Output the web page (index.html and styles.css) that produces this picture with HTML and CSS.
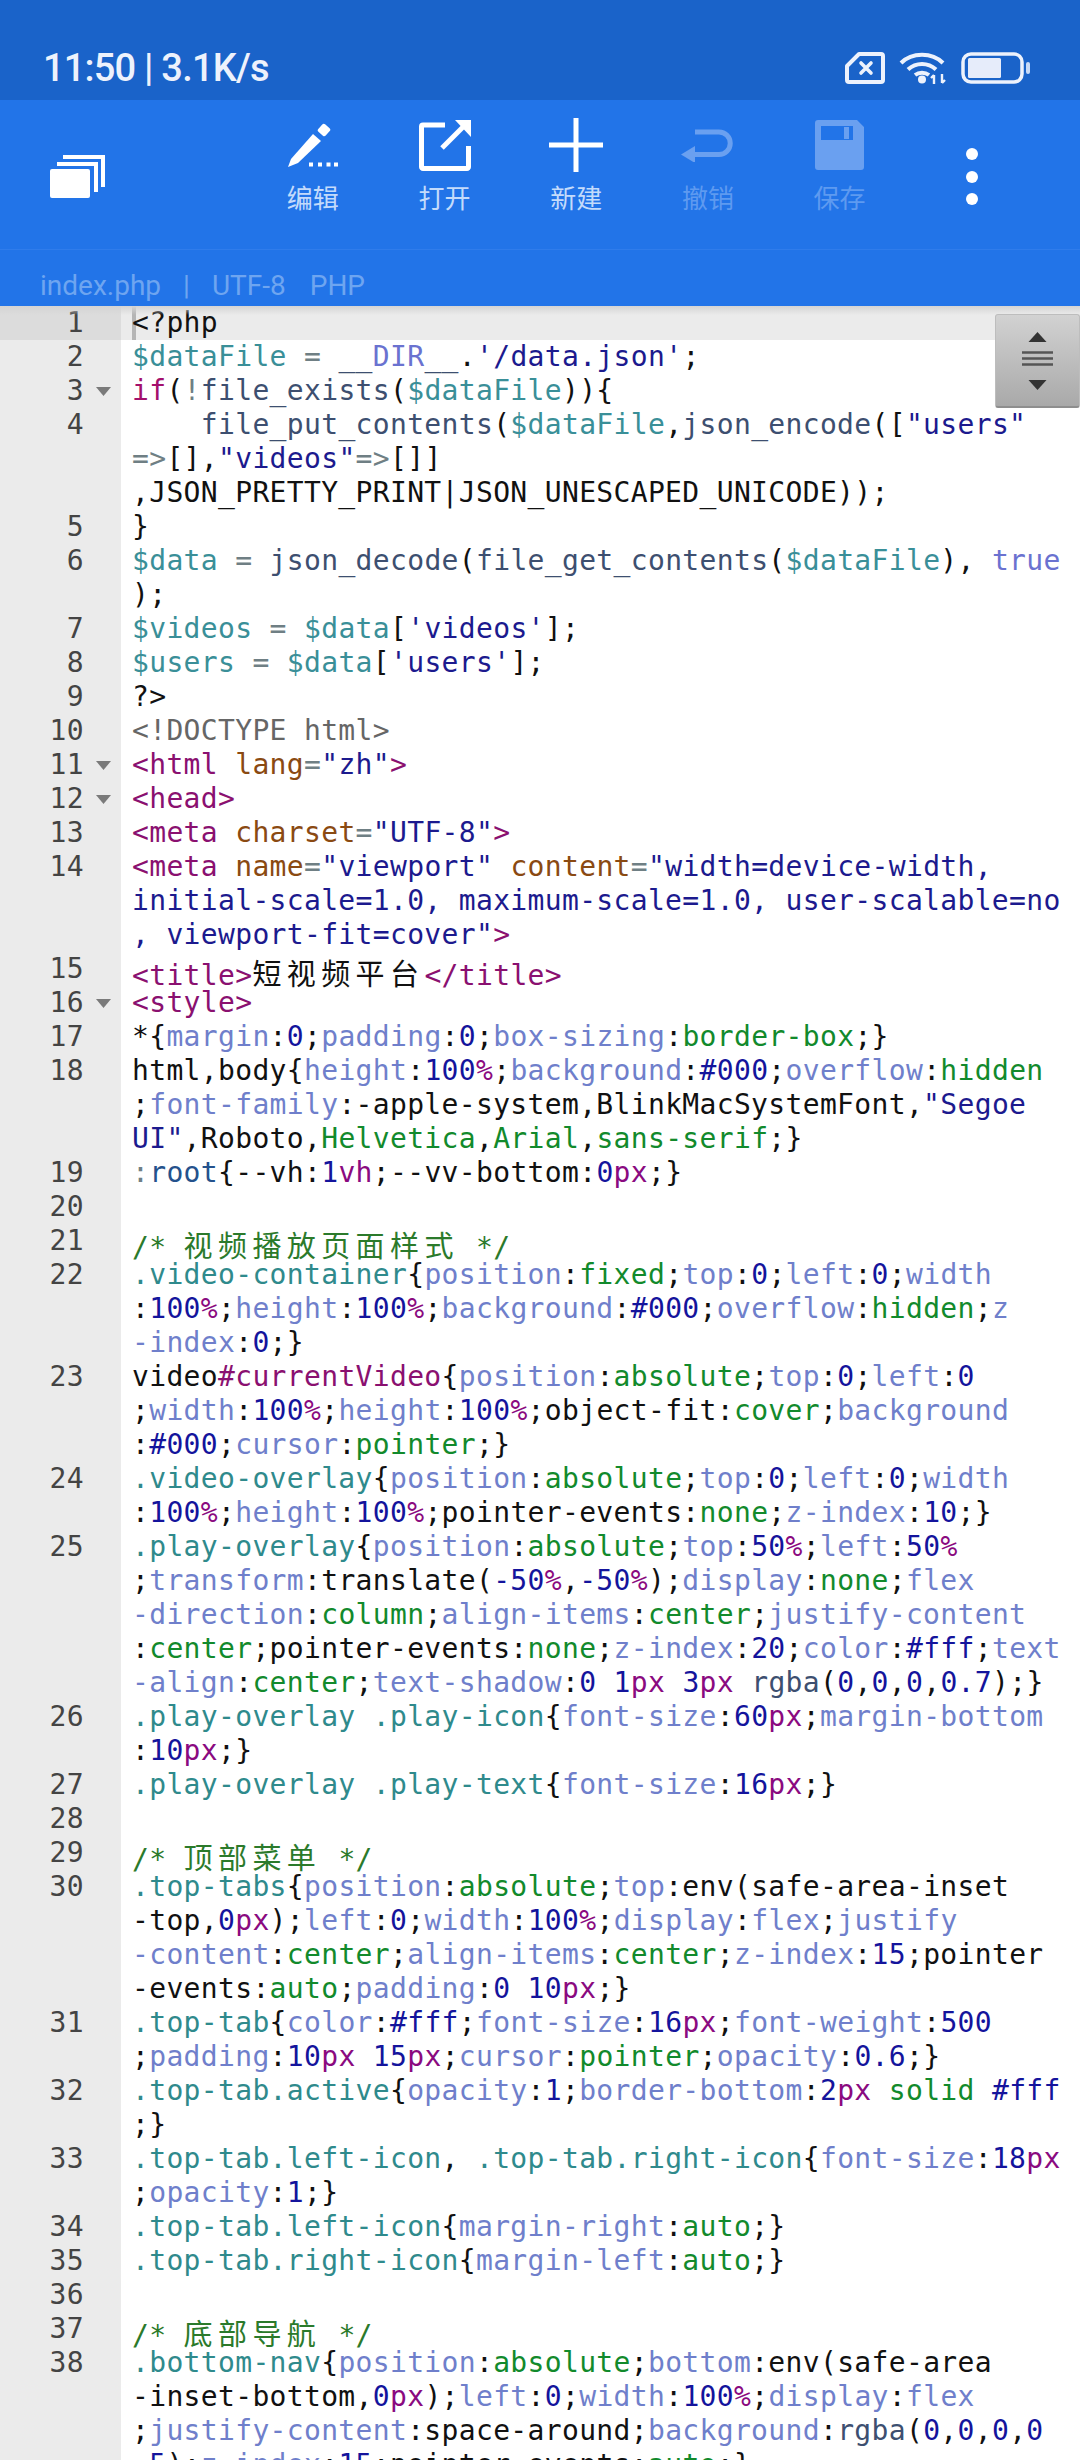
FILE: index.html
```html
<!DOCTYPE html>
<html lang="zh-CN">
<head>
<meta charset="utf-8">
<title>index.php</title>
<link rel="stylesheet" href="styles.css">
</head>
<body>
<div class="app">
<header class="statusbar">
  <div class="clock">11:50 | 3.1K/s</div>
  <div class="status-icons">
    <svg class="i-sim" width="40" height="32" viewBox="0 0 40 32"><path d="M14 2H36a2 2 0 0 1 2 2V28a2 2 0 0 1-2 2H4a2 2 0 0 1-2-2V14Z" fill="none" stroke="#edf2fc" stroke-width="4" stroke-linejoin="round"/><path d="M16 11l10 10M26 11L16 21" stroke="#edf2fc" stroke-width="3.6" stroke-linecap="round"/></svg>
    <svg class="i-wifi" width="48" height="34" viewBox="0 0 48 34"><g fill="none" stroke="#edf2fc" stroke-width="4"><path d="M2 12C13 1 33 1 44 12"/><path d="M9 18.500C17 11 29 11 37 18.500"/><path d="M16 24C20 21 26 21 30 24"/></g><circle cx="23" cy="28.500" r="4" fill="#edf2fc"/><path d="M35 33V24M32 27l3-3M43 23V32M46 29l-3 3" stroke="#edf2fc" stroke-width="2.400" fill="none"/></svg>
    <svg class="i-batt" width="69" height="32" viewBox="0 0 69 32"><rect x="2" y="2" width="59" height="28" rx="8" fill="none" stroke="#edf2fc" stroke-width="3.500"/><rect x="7" y="6" width="33" height="20" rx="1.500" fill="#e6ecfa"/><rect x="65" y="10" width="4" height="12" rx="2" fill="#c8daf6"/></svg>
  </div>
</header>
<section class="toolbar">
  <div class="tools">
    <div class="tabs-btn">
      <svg width="55" height="43" viewBox="0 0 55 43"><rect y="14" width="40" height="29" rx="2" fill="#fff"/><path d="M7 9H46V37" fill="none" stroke="#fff" stroke-width="4"/><path d="M13 2H53V32" fill="none" stroke="#fff" stroke-width="4"/></svg>
    </div>
    <div class="tool">
      <div class="tool-icon"><svg class="i-edit" width="50" height="44" viewBox="0 0 50 44"><path d="M0 44L3 36 25 11 33 18 10 40Z" fill="#fff"/><rect x="31" y="2" width="10" height="10" rx="2" transform="rotate(42 36 7)" fill="#fff"/><path d="M21 41.500h4M30 41.500h4M38.500 41.500h4M46 41.500h4" stroke="#fff" stroke-width="4"/></svg></div>
      <span class="tool-label">编辑</span>
    </div>
    <div class="tool">
      <div class="tool-icon"><svg width="52" height="51" viewBox="0 0 52 51"><path d="M26 5H4a1.500 1.500 0 0 0-1.500 1.500V47a1.500 1.500 0 0 0 1.500 1.500H48a1.500 1.500 0 0 0 1.500-1.500V26" fill="none" stroke="#fff" stroke-width="5"/><path d="M23 28L44 7" stroke="#fff" stroke-width="5"/><path d="M36 0H52V17Z" fill="#fff"/></svg></div>
      <span class="tool-label">打开</span>
    </div>
    <div class="tool">
      <div class="tool-icon"><svg width="54" height="54" viewBox="0 0 54 54"><path d="M27 0V54M0 27H54" stroke="#fff" stroke-width="5"/></svg></div>
      <span class="tool-label">新建</span>
    </div>
    <div class="tool off">
      <div class="tool-icon"><svg width="54" height="33" viewBox="0 0 54 33"><path d="M10 25.500H38A11.200 11.200 0 0 0 38 3H14" fill="none" stroke="#6aa0f0" stroke-width="5"/><path d="M0 25.500L14 17V34Z" fill="#6aa0f0"/></svg></div>
      <span class="tool-label">撤销</span>
    </div>
    <div class="tool off">
      <div class="tool-icon"><svg width="49" height="50" viewBox="0 0 49 50"><path d="M3 0H42L49 7V47a3 3 0 0 1-3 3H3a3 3 0 0 1-3-3V3a3 3 0 0 1 3-3ZM6 6V20H38V6Z" fill="#6aa0f0" fill-rule="evenodd"/><rect x="29" y="7" width="5" height="12" fill="#6aa0f0"/></svg></div>
      <span class="tool-label">保存</span>
    </div>
    <div class="tool more"><span class="dot"></span><span class="dot"></span><span class="dot"></span></div>
  </div>
  <div class="fileinfo"><span>index.php</span><span class="bar">|</span><span>UTF-8</span><span class="lang">PHP</span></div>
</section>
<main class="editor">
  <div class="shade"></div>
  <div class="scroll-thumb">
    <svg width="31" height="58" viewBox="0 0 31 58"><path d="M15.500 0L24.500 10H6.500Z" fill="#333"/><path d="M0 20.500H31M0 26.500H31M0 32.500H31" stroke="#555" stroke-width="2.500"/><path d="M15.500 58L24.500 48H6.500Z" fill="#333"/></svg>
  </div>
  <div class="row active"><div class="gut"><span class="num">1</span></div><div class="code"><div class="ln">&lt;?php</div></div></div>
  <div class="row"><div class="gut"><span class="num">2</span></div><div class="code"><div class="ln"><span class="v">$dataFile</span> <span class="o">=</span> <span class="f">__</span><span class="c">DIR</span><span class="f">__</span>.<span class="s">'/data.json'</span>;</div></div></div>
  <div class="row"><div class="gut"><span class="num">3</span><span class="fold"></span></div><div class="code"><div class="ln"><span class="k">if</span>(<span class="o">!</span><span class="f">file_exists</span>(<span class="v">$dataFile</span>)){</div></div></div>
  <div class="row"><div class="gut"><span class="num">4</span></div><div class="code"><div class="ln">    <span class="f">file_put_contents</span>(<span class="v">$dataFile</span>,<span class="f">json_encode</span>([<span class="s">"users"</span></div><div class="ln"><span class="o">=&gt;</span>[],<span class="s">"videos"</span><span class="o">=&gt;</span>[]]</div><div class="ln">,JSON_PRETTY_PRINT|JSON_UNESCAPED_UNICODE));</div></div></div>
  <div class="row"><div class="gut"><span class="num">5</span></div><div class="code"><div class="ln">}</div></div></div>
  <div class="row"><div class="gut"><span class="num">6</span></div><div class="code"><div class="ln"><span class="v">$data</span> <span class="o">=</span> <span class="f">json_decode</span>(<span class="f">file_get_contents</span>(<span class="v">$dataFile</span>), <span class="c">true</span></div><div class="ln">);</div></div></div>
  <div class="row"><div class="gut"><span class="num">7</span></div><div class="code"><div class="ln"><span class="v">$videos</span> <span class="o">=</span> <span class="v">$data</span>[<span class="s">'videos'</span>];</div></div></div>
  <div class="row"><div class="gut"><span class="num">8</span></div><div class="code"><div class="ln"><span class="v">$users</span> <span class="o">=</span> <span class="v">$data</span>[<span class="s">'users'</span>];</div></div></div>
  <div class="row"><div class="gut"><span class="num">9</span></div><div class="code"><div class="ln">?&gt;</div></div></div>
  <div class="row"><div class="gut"><span class="num">10</span></div><div class="code"><div class="ln"><span class="d">&lt;!DOCTYPE html&gt;</span></div></div></div>
  <div class="row"><div class="gut"><span class="num">11</span><span class="fold"></span></div><div class="code"><div class="ln"><span class="t">&lt;html</span> <span class="a">lang</span><span class="o">=</span><span class="s">"zh"</span><span class="t">&gt;</span></div></div></div>
  <div class="row"><div class="gut"><span class="num">12</span><span class="fold"></span></div><div class="code"><div class="ln"><span class="t">&lt;head&gt;</span></div></div></div>
  <div class="row"><div class="gut"><span class="num">13</span></div><div class="code"><div class="ln"><span class="t">&lt;meta</span> <span class="a">charset</span><span class="o">=</span><span class="s">"UTF-8"</span><span class="t">&gt;</span></div></div></div>
  <div class="row"><div class="gut"><span class="num">14</span></div><div class="code"><div class="ln"><span class="t">&lt;meta</span> <span class="a">name</span><span class="o">=</span><span class="s">"viewport"</span> <span class="a">content</span><span class="o">=</span><span class="s">"width=device-width,</span></div><div class="ln"><span class="s">initial-scale=1.0, maximum-scale=1.0, user-scalable=no</span></div><div class="ln"><span class="s">, viewport-fit=cover"</span><span class="t">&gt;</span></div></div></div>
  <div class="row"><div class="gut"><span class="num">15</span></div><div class="code"><div class="ln wide"><span class="t">&lt;title&gt;</span><span class="cjk">短视频平台</span><span class="t">&lt;/title&gt;</span></div></div></div>
  <div class="row"><div class="gut"><span class="num">16</span><span class="fold"></span></div><div class="code"><div class="ln"><span class="t">&lt;style&gt;</span></div></div></div>
  <div class="row"><div class="gut"><span class="num">17</span></div><div class="code"><div class="ln">*{<span class="p">margin</span>:<span class="n">0</span>;<span class="p">padding</span>:<span class="n">0</span>;<span class="p">box-sizing</span>:<span class="w">border-box</span>;}</div></div></div>
  <div class="row"><div class="gut"><span class="num">18</span></div><div class="code"><div class="ln">html,body{<span class="p">height</span>:<span class="n">100</span><span class="u">%</span>;<span class="p">background</span>:<span class="n">#000</span>;<span class="p">overflow</span>:<span class="w">hidden</span></div><div class="ln">;<span class="p">font-family</span>:-apple-system,BlinkMacSystemFont,<span class="s">"Segoe</span></div><div class="ln"><span class="s">UI"</span>,Roboto,<span class="w">Helvetica</span>,<span class="w">Arial</span>,<span class="w">sans-serif</span>;}</div></div></div>
  <div class="row"><div class="gut"><span class="num">19</span></div><div class="code"><div class="ln"><span class="o">:</span><span class="r">root</span>{--vh:<span class="n">1</span><span class="u">vh</span>;--vv-bottom:<span class="n">0</span><span class="u">px</span>;}</div></div></div>
  <div class="row"><div class="gut"><span class="num">20</span></div><div class="code"><div class="ln"></div></div></div>
  <div class="row"><div class="gut"><span class="num">21</span></div><div class="code"><div class="ln wide"><span class="m">/* <span class="cjk">视频播放页面样式</span> */</span></div></div></div>
  <div class="row"><div class="gut"><span class="num">22</span></div><div class="code"><div class="ln"><span class="h">.video-container</span>{<span class="p">position</span>:<span class="w">fixed</span>;<span class="p">top</span>:<span class="n">0</span>;<span class="p">left</span>:<span class="n">0</span>;<span class="p">width</span></div><div class="ln">:<span class="n">100</span><span class="u">%</span>;<span class="p">height</span>:<span class="n">100</span><span class="u">%</span>;<span class="p">background</span>:<span class="n">#000</span>;<span class="p">overflow</span>:<span class="w">hidden</span>;<span class="p">z</span></div><div class="ln"><span class="p">-index</span>:<span class="n">0</span>;}</div></div></div>
  <div class="row"><div class="gut"><span class="num">23</span></div><div class="code"><div class="ln">video<span class="t">#currentVideo</span>{<span class="p">position</span>:<span class="w">absolute</span>;<span class="p">top</span>:<span class="n">0</span>;<span class="p">left</span>:<span class="n">0</span></div><div class="ln">;<span class="p">width</span>:<span class="n">100</span><span class="u">%</span>;<span class="p">height</span>:<span class="n">100</span><span class="u">%</span>;object-fit:<span class="w">cover</span>;<span class="p">background</span></div><div class="ln">:<span class="n">#000</span>;<span class="p">cursor</span>:<span class="w">pointer</span>;}</div></div></div>
  <div class="row"><div class="gut"><span class="num">24</span></div><div class="code"><div class="ln"><span class="h">.video-overlay</span>{<span class="p">position</span>:<span class="w">absolute</span>;<span class="p">top</span>:<span class="n">0</span>;<span class="p">left</span>:<span class="n">0</span>;<span class="p">width</span></div><div class="ln">:<span class="n">100</span><span class="u">%</span>;<span class="p">height</span>:<span class="n">100</span><span class="u">%</span>;pointer-events:<span class="w">none</span>;<span class="p">z-index</span>:<span class="n">10</span>;}</div></div></div>
  <div class="row"><div class="gut"><span class="num">25</span></div><div class="code"><div class="ln"><span class="h">.play-overlay</span>{<span class="p">position</span>:<span class="w">absolute</span>;<span class="p">top</span>:<span class="n">50</span><span class="u">%</span>;<span class="p">left</span>:<span class="n">50</span><span class="u">%</span></div><div class="ln">;<span class="p">transform</span>:translate(<span class="n">-50</span><span class="u">%</span>,<span class="n">-50</span><span class="u">%</span>);<span class="p">display</span>:<span class="w">none</span>;<span class="p">flex</span></div><div class="ln"><span class="p">-direction</span>:<span class="w">column</span>;<span class="p">align-items</span>:<span class="w">center</span>;<span class="p">justify-content</span></div><div class="ln">:<span class="w">center</span>;pointer-events:<span class="w">none</span>;<span class="p">z-index</span>:<span class="n">20</span>;<span class="p">color</span>:<span class="n">#fff</span>;<span class="p">text</span></div><div class="ln"><span class="p">-align</span>:<span class="w">center</span>;<span class="p">text-shadow</span>:<span class="n">0</span> <span class="n">1</span><span class="u">px</span> <span class="n">3</span><span class="u">px</span> <span class="f">rgba</span>(<span class="n">0</span>,<span class="n">0</span>,<span class="n">0</span>,<span class="n">0.7</span>);}</div></div></div>
  <div class="row"><div class="gut"><span class="num">26</span></div><div class="code"><div class="ln"><span class="h">.play-overlay</span> <span class="h">.play-icon</span>{<span class="p">font-size</span>:<span class="n">60</span><span class="u">px</span>;<span class="p">margin-bottom</span></div><div class="ln">:<span class="n">10</span><span class="u">px</span>;}</div></div></div>
  <div class="row"><div class="gut"><span class="num">27</span></div><div class="code"><div class="ln"><span class="h">.play-overlay</span> <span class="h">.play-text</span>{<span class="p">font-size</span>:<span class="n">16</span><span class="u">px</span>;}</div></div></div>
  <div class="row"><div class="gut"><span class="num">28</span></div><div class="code"><div class="ln"></div></div></div>
  <div class="row"><div class="gut"><span class="num">29</span></div><div class="code"><div class="ln wide"><span class="m">/* <span class="cjk">顶部菜单</span> */</span></div></div></div>
  <div class="row"><div class="gut"><span class="num">30</span></div><div class="code"><div class="ln"><span class="h">.top-tabs</span>{<span class="p">position</span>:<span class="w">absolute</span>;<span class="p">top</span>:env(safe-area-inset</div><div class="ln">-top,<span class="n">0</span><span class="u">px</span>);<span class="p">left</span>:<span class="n">0</span>;<span class="p">width</span>:<span class="n">100</span><span class="u">%</span>;<span class="p">display</span>:<span class="p">flex</span>;<span class="p">justify</span></div><div class="ln"><span class="p">-content</span>:<span class="w">center</span>;<span class="p">align-items</span>:<span class="w">center</span>;<span class="p">z-index</span>:<span class="n">15</span>;pointer</div><div class="ln">-events:<span class="w">auto</span>;<span class="p">padding</span>:<span class="n">0</span> <span class="n">10</span><span class="u">px</span>;}</div></div></div>
  <div class="row"><div class="gut"><span class="num">31</span></div><div class="code"><div class="ln"><span class="h">.top-tab</span>{<span class="p">color</span>:<span class="n">#fff</span>;<span class="p">font-size</span>:<span class="n">16</span><span class="u">px</span>;<span class="p">font-weight</span>:<span class="n">500</span></div><div class="ln">;<span class="p">padding</span>:<span class="n">10</span><span class="u">px</span> <span class="n">15</span><span class="u">px</span>;<span class="p">cursor</span>:<span class="w">pointer</span>;<span class="p">opacity</span>:<span class="n">0.6</span>;}</div></div></div>
  <div class="row"><div class="gut"><span class="num">32</span></div><div class="code"><div class="ln"><span class="h">.top-tab.active</span>{<span class="p">opacity</span>:<span class="n">1</span>;<span class="p">border-bottom</span>:<span class="n">2</span><span class="u">px</span> <span class="w">solid</span> <span class="n">#fff</span></div><div class="ln">;}</div></div></div>
  <div class="row"><div class="gut"><span class="num">33</span></div><div class="code"><div class="ln"><span class="h">.top-tab.left-icon</span>, <span class="h">.top-tab.right-icon</span>{<span class="p">font-size</span>:<span class="n">18</span><span class="u">px</span></div><div class="ln">;<span class="p">opacity</span>:<span class="n">1</span>;}</div></div></div>
  <div class="row"><div class="gut"><span class="num">34</span></div><div class="code"><div class="ln"><span class="h">.top-tab.left-icon</span>{<span class="p">margin-right</span>:<span class="w">auto</span>;}</div></div></div>
  <div class="row"><div class="gut"><span class="num">35</span></div><div class="code"><div class="ln"><span class="h">.top-tab.right-icon</span>{<span class="p">margin-left</span>:<span class="w">auto</span>;}</div></div></div>
  <div class="row"><div class="gut"><span class="num">36</span></div><div class="code"><div class="ln"></div></div></div>
  <div class="row"><div class="gut"><span class="num">37</span></div><div class="code"><div class="ln wide"><span class="m">/* <span class="cjk">底部导航</span> */</span></div></div></div>
  <div class="row"><div class="gut"><span class="num">38</span></div><div class="code"><div class="ln"><span class="h">.bottom-nav</span>{<span class="p">position</span>:<span class="w">absolute</span>;<span class="p">bottom</span>:env(safe-area</div><div class="ln">-inset-bottom,<span class="n">0</span><span class="u">px</span>);<span class="p">left</span>:<span class="n">0</span>;<span class="p">width</span>:<span class="n">100</span><span class="u">%</span>;<span class="p">display</span>:<span class="p">flex</span></div><div class="ln">;<span class="p">justify-content</span>:space-around;<span class="p">background</span>:<span class="f">rgba</span>(<span class="n">0</span>,<span class="n">0</span>,<span class="n">0</span>,<span class="n">0</span></div><div class="ln"><span class="n">.5</span>);<span class="p">z-index</span>:<span class="n">15</span>;pointer-events:<span class="w">auto</span>;}</div></div></div>
</main>
</div>
</body>
</html>
```
FILE: styles.css
```css
* { box-sizing: border-box; }
html, body { margin: 0; padding: 0; background: #fff; }
.app { width: 1080px; height: 2460px; overflow: hidden; display: flex; flex-direction: column; }

.statusbar {
  height: 100px; background: #1a63c9; color: #edf2fc;
  display: flex; justify-content: space-between; align-items: center;
  padding: 36px 50px 0 43px; flex: none;
}
.clock { font: 500 38px/1 Roboto, "Liberation Sans", sans-serif; letter-spacing: -0.800px; }
.status-icons { display: flex; align-items: center; gap: 14px; }
.status-icons svg { display: block; }

.toolbar { background: #2274e8; height: 206px; flex: none; display: flex; flex-direction: column; }
.tools { height: 150px; display: flex; border-bottom: 1px solid #2f7ceb; }
.tabs-btn { width: 247px; padding: 55px 0 0 50px; flex: none; }
.tabs-btn svg { display: block; }
.tool { width: 131.700px; flex: none; display: flex; flex-direction: column; align-items: center; padding-top: 18px; }
.tool-icon { height: 54px; display: flex; align-items: center; justify-content: center; }
.tool-icon svg { display: block; }
.tool-label { font: 400 26px/30px "Noto Sans CJK SC", sans-serif; color: #c4dbfb; margin-top: 10px; }
.off .tool-label { color: #5e9af0; }
.more { justify-content: flex-start; gap: 10.500px; padding: 48px 0 0 1px; }
.dot { width: 12px; height: 12px; border-radius: 50%; background: #fff; }
.fileinfo {
  flex: 1; display: flex; align-items: flex-end; padding: 0 0 2px 40px;
  font: 400 28px/36px Roboto, "Liberation Sans", sans-serif; color: #6ea5f0;
}
.bar { margin: 0 22px 0 22px; }
.lang { margin-left: 24px; }

.editor {
  flex: 1; position: relative; overflow: hidden; background: #fff;
  font: 400 28px/34px "DejaVu Sans Mono", "Noto Sans CJK SC", monospace;
  letter-spacing: 0.340px; color: #111;
}
.shade { position: absolute; left: 0; right: 0; top: 0; height: 9px; background: linear-gradient(#d4d4d4, rgba(212,212,212,0)); z-index: 2; }
.scroll-thumb {
  position: absolute; left: 995px; top: 8px; width: 85px; height: 94px; z-index: 3;
  background: linear-gradient(#d2d2d2, #a9a9a9);
  border: 1px solid #bdbdbd; border-bottom: 2px solid #8e8e8e; border-radius: 3px;
  display: flex; align-items: center; justify-content: center;
}
.scroll-thumb svg { display: block; }

.row { display: flex; }
.gut { width: 121px; flex: none; background: #ebebeb; display: flex; }
.num { width: 84px; text-align: right; color: #444; height: 34px; }
.fold { width: 15px; height: 9px; margin: 13px 0 0 12px; background: #7a7a7a; clip-path: polygon(0 0, 100% 0, 50% 100%); }
.code { flex: 1; padding-left: 11px; min-width: 0; }
.ln { height: 34px; white-space: pre; }
.ln.wide { padding-top: 6px; }
.active { background: #ebebeb; }
.active .gut { background: #dcdcdc; }
.active .code { position: relative; }
.active .code::before { content: ""; position: absolute; left: 11px; top: 0; width: 4px; height: 34px; background: #b5b5b5; }
.active .ln { position: relative; }

.cjk { font-size: 29px; letter-spacing: 5.400px; }
.v { color: #3a8f98; }
.f { color: #3d4f70; }
.k { color: #a3106c; }
.s { color: #1c1a8e; }
.c { color: #6a72d0; }
.t { color: #8a1070; }
.a { color: #8a4a12; }
.d { color: #666; }
.m { color: #2b7a2b; }
.p { color: #6f7fcb; }
.w { color: #128a2c; }
.n { color: #14149c; }
.u { color: #8a0a80; }
.h { color: #2f8a8c; }
.o { color: #6f7f84; }
.r { color: #24528c; }
```
